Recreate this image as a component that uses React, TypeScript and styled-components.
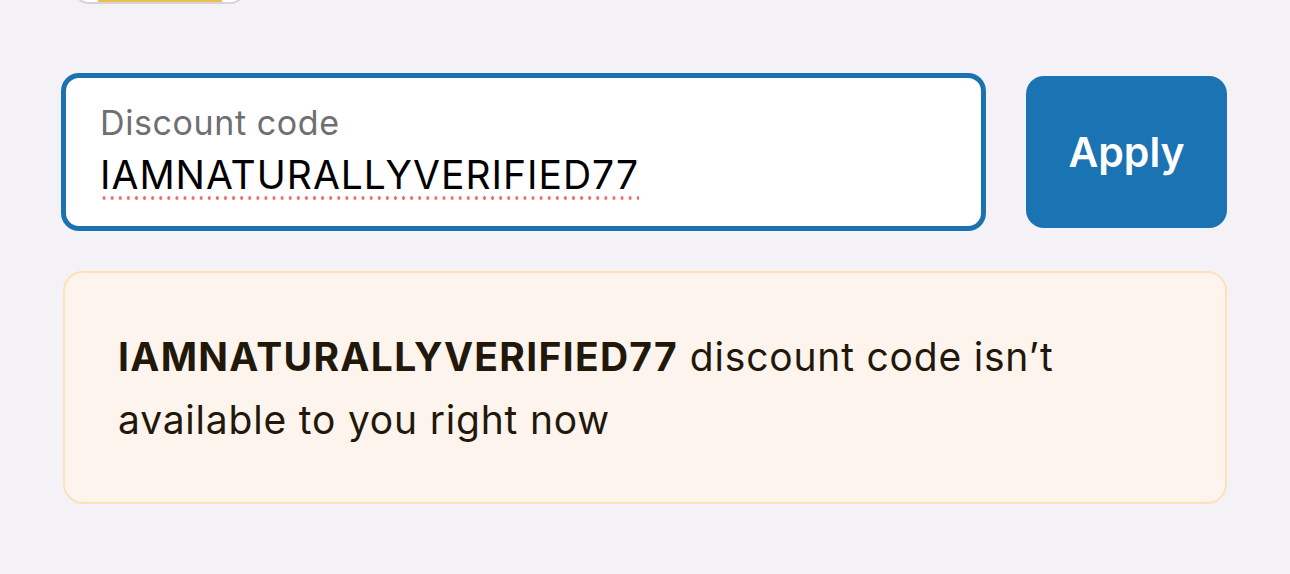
import { FC } from 'react'
import styled, { createGlobalStyle } from 'styled-components'

const GlobalStyle = createGlobalStyle`
	html, body {
		margin: 0;
		padding: 0;
		background: #f4f2f6;
	}
	body {
		font-family: Inter, 'Noto Sans', sans-serif;
		-webkit-font-smoothing: antialiased;
	}
`

const Page = styled.div`
	width: 1290px;
	height: 574px;
	overflow: hidden;
	box-sizing: border-box;
	padding: 0 63px;
	display: flex;
	flex-direction: column;
`

const ChipStub = styled.div`
	margin: -40px 0 0 10px;
	width: 173px;
	height: 44px;
	box-sizing: border-box;
	border: 2px solid #d6d4d9;
	border-radius: 16px;
	background: #ffffff;
	display: flex;
	align-items: flex-end;
	justify-content: center;
	overflow: hidden;
`

const ChipHighlight = styled.div`
	width: 124px;
	height: 8px;
	background: #e9c24e;
`

const FormRow = styled.div`
	margin-top: 71px;
	display: flex;
	align-items: center;
	gap: 42px;
`

const Field = styled.label`
	flex: 1;
	height: 154px;
	box-sizing: border-box;
	border: 3px solid #1a72b0;
	box-shadow: 0 0 0 2px #1a72b0;
	border-radius: 16px;
	background: #ffffff;
	padding: 27px 34px 0;
	display: flex;
	flex-direction: column;
	gap: 11px;
`

const FieldLabel = styled.span`
	font-family: Inter, 'Noto Sans', sans-serif;
	font-size: 34px;
	line-height: 36px;
	letter-spacing: 0.6px;
	color: #6f6f71;
`

const FieldValue = styled.span`
	align-self: flex-start;
	font-family: Inter, 'Noto Sans', sans-serif;
	font-size: 39px;
	line-height: 46px;
	letter-spacing: 1px;
	color: #000000;
	padding-bottom: 2px;
	background-image: radial-gradient(circle, #f26a6a 1.6px, transparent 1.9px);
	background-size: 8.1px 4px;
	background-repeat: repeat-x;
	background-position: 0 100%;
`

const ApplyButton = styled.button`
	width: 201px;
	height: 152px;
	border: none;
	border-radius: 18px;
	background: #1a73b2;
	color: #ffffff;
	font-family: Inter, 'Noto Sans', sans-serif;
	font-weight: 600;
	font-size: 41px;
	cursor: pointer;
`

const Notice = styled.div`
	margin-top: 42px;
	box-sizing: border-box;
	height: 233px;
	border: 2px solid #fde2b8;
	border-radius: 20px;
	background: #fef4ee;
	padding: 0 52px 0 53px;
	display: flex;
	align-items: center;
`

const NoticeText = styled.p`
	margin: 0;
	font-size: 39px;
	line-height: 63px;
	letter-spacing: 0.8px;
	color: #22180a;
`

const Code = styled.strong`
	font-weight: 650;
	letter-spacing: 1.3px;
`

const code = 'IAMNATURALLYVERIFIED77'

const App: FC = () => (
	<>
		<GlobalStyle />
		<Page>
			<ChipStub>
				<ChipHighlight />
			</ChipStub>
			<FormRow>
				<Field>
					<FieldLabel>Discount code</FieldLabel>
					<FieldValue>{code}</FieldValue>
				</Field>
				<ApplyButton>Apply</ApplyButton>
			</FormRow>
			<Notice>
				<NoticeText>
					<Code>{code}</Code> discount code isn’t available to you right now
				</NoticeText>
			</Notice>
		</Page>
	</>
)

export default App
